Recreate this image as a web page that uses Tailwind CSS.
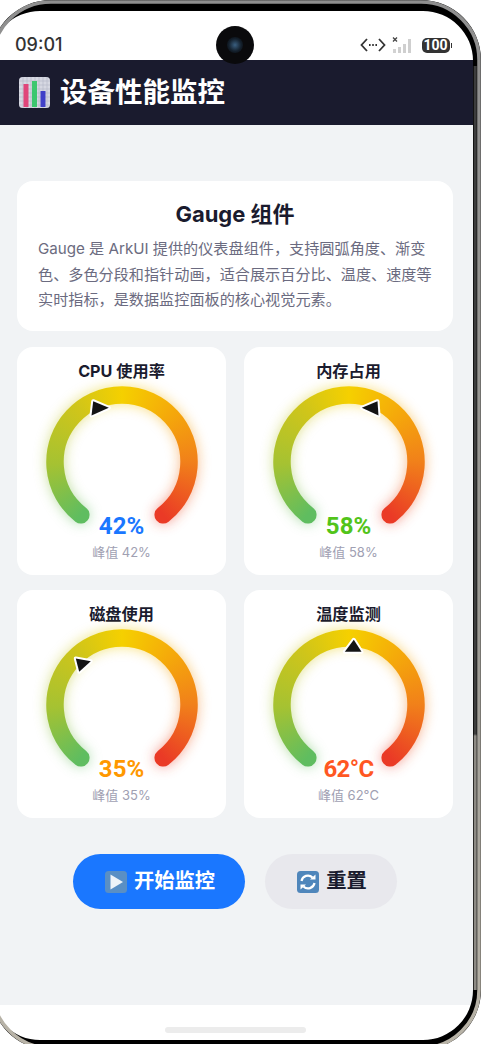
<!DOCTYPE html>
<html lang="zh-CN">
<head>
    <meta charset="UTF-8" />
    <title>设备性能监控</title>
    <script src="https://cdn.jsdelivr.net/npm/@tailwindcss/browser@4"></script>
</head>
<body class="bg-white font-['Inter','Noto_Sans_CJK_SC',sans-serif] text-[#1a1b2e]">

<!-- shared gauge mask and glow -->
<svg class="absolute w-0 h-0">
    <defs>
        <filter id="glow" x="-30%" y="-30%" width="160%" height="160%"><feGaussianBlur stdDeviation="6.5" /></filter>
        <mask id="ringMask" maskUnits="userSpaceOnUse" x="-20" y="-20" width="200" height="200">
            <path d="M38.8 132.8 A67 67 0 1 1 121.2 132.8" fill="none" stroke="#fff" stroke-width="17.5" stroke-linecap="round" />
        </mask>
    </defs>
</svg>

<div class="relative h-[1044px] w-[482px] overflow-hidden bg-white">
    <div class="w-[473px]">
        <!-- status bar -->
        <div class="flex h-[60px] items-end justify-between pb-[4px] pl-[15px] pr-[21px]">
            <span class="text-[18px] leading-[22px] font-medium text-[#333]">09:01</span>
            <div class="flex items-center gap-[6px] pb-[2px]">
                <svg width="26" height="16" viewBox="0 0 26 16" fill="none" stroke="#333" stroke-width="1.8"><path d="M7 2 L1.5 8 L7 14 M19 2 L24.5 8 L19 14" /><path d="M9 8h1.6M12.2 8h1.6M15.4 8h1.6" /></svg>
                <svg width="24" height="18" viewBox="0 0 24 18"><path d="M1 1.5l4 4M5 1.5l-4 4" stroke="#444" stroke-width="1.3" /><rect x="1" y="13" width="3" height="4" fill="#d2d2d2" /><rect x="6" y="11" width="3" height="6" fill="#cfcfcf" /><rect x="11" y="8" width="3" height="9" fill="#cfcfcf" /><rect x="16" y="3" width="3" height="14" fill="#cfcfcf" /></svg>
                <div class="flex items-center">
                    <span class="flex h-[15px] w-[28px] items-center justify-center rounded-[5px] bg-[#333] font-['Roboto'] text-[14px] leading-none font-bold text-white">100</span>
                    <span class="ml-[1px] h-[5px] w-[1.5px] bg-[#333]"></span>
                </div>
            </div>
        </div>

        <!-- header -->
        <header class="flex h-[65px] items-center gap-[10px] bg-[#1a1b2e] pl-[19px]">
            <svg width="31" height="31" viewBox="0 0 31 31">
                <rect width="31" height="31" rx="3.5" fill="#d6d8e2" />
                <path d="M0 4h31M0 8h31M0 12h31M0 16h31M0 20h31M0 24h31M0 28h31M4 0v31M8 0v31M12 0v31M16 0v31M20 0v31M24 0v31M28 0v31" stroke="#b4b7c6" stroke-width="0.6" />
                <rect x="4.5" y="7" width="5" height="23" fill="#e0457a" />
                <rect x="13" y="4" width="5" height="26" fill="#3cc76f" />
                <rect x="21.5" y="14" width="5" height="16" fill="#4040c8" />
            </svg>
            <h1 class="text-[27.5px] leading-none font-bold text-white">设备性能监控</h1>
        </header>

        <!-- content -->
        <main class="h-[880px] bg-[#f1f3f5] pt-[56px] pl-[17px] pr-[20px]">
            <section class="h-[150px] rounded-[16px] bg-white px-[21px] pt-[19px]">
                <h2 class="text-center text-[22px] leading-[28px] font-bold">Gauge 组件</h2>
                <p class="mt-[8px] text-[15.15px] leading-[25.5px] whitespace-nowrap text-[#6b6b80]">Gauge 是 ArkUI 提供的仪表盘组件，支持圆弧角度、渐变<br />色、多色分段和指针动画，适合展示百分比、温度、速度等<br />实时指标，是数据监控面板的核心视觉元素。</p>
            </section>

            <div class="mt-[16px] grid grid-cols-2 gap-x-[18px] gap-y-[15px]">
                <!-- CPU -->
                <div class="flex h-[228px] flex-col items-center rounded-[16px] bg-white pt-[14px]">
                    <h3 class="text-[16.2px] leading-[20px] font-bold">CPU 使用率</h3>
                    <div class="relative mt-[0.5px] h-[160px] w-[160px]">
                        <svg width="160" height="160" viewBox="0 0 160 160" class="overflow-visible">
                            <g filter="url(#glow)" opacity="0.5">
                                <foreignObject width="160" height="160" mask="url(#ringMask)"><div class="h-[160px] w-[160px] bg-[conic-gradient(from_180deg,#5fbd60_0deg_38deg,#a5c232_88deg,#cfc51a_140deg,#f5d000_180deg,#f5a90a_225deg,#f1801a_270deg,#ea3a26_322deg_360deg)]"></div></foreignObject>
                            </g>
                            <foreignObject width="160" height="160" mask="url(#ringMask)"><div class="h-[160px] w-[160px] bg-[conic-gradient(from_180deg,#5fbd60_0deg_38deg,#a5c232_88deg,#cfc51a_140deg,#f5d000_180deg,#f5a90a_225deg,#f1801a_270deg,#ea3a26_322deg_360deg)]"></div></foreignObject>
                            <polygon points="51.2,19.2 66.8,25.8 49.5,33.5" fill="#141414" stroke="#fff" stroke-width="4" stroke-linejoin="round" paint-order="stroke" />
                        </svg>
                        <span class="absolute inset-x-0 bottom-[2px] text-center font-['Roboto','Noto_Sans_CJK_SC',sans-serif] text-[24px] leading-[28px] font-bold text-[#1a77ff]">42%</span>
                    </div>
                    <p class="mt-[1.5px] text-[13px] leading-[18px] text-[#a0a0b2]">峰值 42%</p>
                </div>
                <!-- memory -->
                <div class="flex h-[228px] flex-col items-center rounded-[16px] bg-white pt-[14px]">
                    <h3 class="text-[16.2px] leading-[20px] font-bold">内存占用</h3>
                    <div class="relative mt-[0.5px] h-[160px] w-[160px]">
                        <svg width="160" height="160" viewBox="0 0 160 160" class="overflow-visible">
                            <g filter="url(#glow)" opacity="0.5">
                                <foreignObject width="160" height="160" mask="url(#ringMask)"><div class="h-[160px] w-[160px] bg-[conic-gradient(from_180deg,#5fbd60_0deg_38deg,#a5c232_88deg,#cfc51a_140deg,#f5d000_180deg,#f5a90a_225deg,#f1801a_270deg,#ea3a26_322deg_360deg)]"></div></foreignObject>
                            </g>
                            <foreignObject width="160" height="160" mask="url(#ringMask)"><div class="h-[160px] w-[160px] bg-[conic-gradient(from_180deg,#5fbd60_0deg_38deg,#a5c232_88deg,#cfc51a_140deg,#f5d000_180deg,#f5a90a_225deg,#f1801a_270deg,#ea3a26_322deg_360deg)]"></div></foreignObject>
                            <polygon points="108.5,19.2 92.8,25.8 109.5,33.5" fill="#141414" stroke="#fff" stroke-width="4" stroke-linejoin="round" paint-order="stroke" />
                        </svg>
                        <span class="absolute inset-x-0 bottom-[2px] text-center font-['Roboto','Noto_Sans_CJK_SC',sans-serif] text-[24px] leading-[28px] font-bold text-[#52c41a]">58%</span>
                    </div>
                    <p class="mt-[1.5px] text-[13px] leading-[18px] text-[#a0a0b2]">峰值 58%</p>
                </div>
                <!-- disk -->
                <div class="flex h-[228px] flex-col items-center rounded-[16px] bg-white pt-[14px]">
                    <h3 class="text-[16.2px] leading-[20px] font-bold">磁盘使用</h3>
                    <div class="relative mt-[0.5px] h-[160px] w-[160px]">
                        <svg width="160" height="160" viewBox="0 0 160 160" class="overflow-visible">
                            <g filter="url(#glow)" opacity="0.5">
                                <foreignObject width="160" height="160" mask="url(#ringMask)"><div class="h-[160px] w-[160px] bg-[conic-gradient(from_180deg,#5fbd60_0deg_38deg,#a5c232_88deg,#cfc51a_140deg,#f5d000_180deg,#f5a90a_225deg,#f1801a_270deg,#ea3a26_322deg_360deg)]"></div></foreignObject>
                            </g>
                            <foreignObject width="160" height="160" mask="url(#ringMask)"><div class="h-[160px] w-[160px] bg-[conic-gradient(from_180deg,#5fbd60_0deg_38deg,#a5c232_88deg,#cfc51a_140deg,#f5d000_180deg,#f5a90a_225deg,#f1801a_270deg,#ea3a26_322deg_360deg)]"></div></foreignObject>
                            <polygon points="33.8,33.5 48.8,36.2 37.2,46.8" fill="#141414" stroke="#fff" stroke-width="4" stroke-linejoin="round" paint-order="stroke" />
                        </svg>
                        <span class="absolute inset-x-0 bottom-[2px] text-center font-['Roboto','Noto_Sans_CJK_SC',sans-serif] text-[24px] leading-[28px] font-bold text-[#ff9800]">35%</span>
                    </div>
                    <p class="mt-[1.5px] text-[13px] leading-[18px] text-[#a0a0b2]">峰值 35%</p>
                </div>
                <!-- temperature -->
                <div class="flex h-[228px] flex-col items-center rounded-[16px] bg-white pt-[14px]">
                    <h3 class="text-[16.2px] leading-[20px] font-bold">温度监测</h3>
                    <div class="relative mt-[0.5px] h-[160px] w-[160px]">
                        <svg width="160" height="160" viewBox="0 0 160 160" class="overflow-visible">
                            <g filter="url(#glow)" opacity="0.5">
                                <foreignObject width="160" height="160" mask="url(#ringMask)"><div class="h-[160px] w-[160px] bg-[conic-gradient(from_180deg,#5fbd60_0deg_38deg,#a5c232_88deg,#cfc51a_140deg,#f5d000_180deg,#f5a90a_225deg,#f1801a_270deg,#ea3a26_322deg_360deg)]"></div></foreignObject>
                            </g>
                            <foreignObject width="160" height="160" mask="url(#ringMask)"><div class="h-[160px] w-[160px] bg-[conic-gradient(from_180deg,#5fbd60_0deg_38deg,#a5c232_88deg,#cfc51a_140deg,#f5d000_180deg,#f5a90a_225deg,#f1801a_270deg,#ea3a26_322deg_360deg)]"></div></foreignObject>
                            <polygon points="84.8,14.8 92.5,26.8 75.8,26.8" fill="#141414" stroke="#fff" stroke-width="4" stroke-linejoin="round" paint-order="stroke" />
                        </svg>
                        <span class="absolute inset-x-0 bottom-[2px] text-center font-['Roboto','Noto_Sans_CJK_SC',sans-serif] text-[24px] leading-[28px] font-bold tracking-[-0.6px] text-[#ff5722]">62°C</span>
                    </div>
                    <p class="mt-[1.5px] text-[13px] leading-[18px] text-[#a0a0b2]">峰值 62°C</p>
                </div>
            </div>

            <!-- buttons -->
            <div class="mt-[36px] flex justify-center gap-[20px]">
                <button class="flex h-[55px] w-[172px] items-center justify-center gap-[7px] rounded-full bg-[#1a77ff] pl-[2px] text-[20.3px] font-bold text-white">
                    <svg width="22" height="22" viewBox="0 0 22 22"><rect width="22" height="22" rx="3.5" fill="#5a8fc4" /><path d="M5.5 3.5 L18 11 L5.5 18.5Z" fill="#eef3f8" /></svg>
                    开始监控
                </button>
                <button class="flex h-[55px] w-[132px] items-center justify-center gap-[7px] rounded-full bg-[#e8e8ed] pl-[2px] text-[20.3px] font-bold text-[#1a1b2e]">
                    <svg width="22" height="22" viewBox="0 0 22 22" fill="none"><rect width="22" height="22" rx="3.5" fill="#4f86bb" /><path d="M4.5 10 A6.5 6.5 0 0 1 15.5 6.5" stroke="#fff" stroke-width="2.2" /><path d="M17.5 12 A6.5 6.5 0 0 1 6.5 15.5" stroke="#fff" stroke-width="2.2" /><path d="M13 8.5h5.5V3.5Z M9 13.5H3.5v5Z" fill="#fff" /></svg>
                    重置
                </button>
            </div>
        </main>

        <!-- home indicator -->
        <div class="flex justify-center pt-[22px]">
            <span class="ml-[-3px] h-[6px] w-[141px] rounded-full bg-[#ececec]"></span>
        </div>
    </div>

    <!-- camera cutout -->
    <div class="absolute top-[26px] left-[216px] flex h-[38px] w-[38px] items-center justify-center rounded-full bg-[#0a0a0c]">
        <div class="h-[16px] w-[16px] rounded-full bg-[radial-gradient(circle,#3a5f80_0%,#14202c_55%,#050608_100%)]"></div>
    </div>

    <!-- phone bezel over the screen -->
    <svg class="absolute inset-0" width="482" height="1044" viewBox="0 0 482 1044" fill="none">
        <defs>
            <linearGradient id="edgeOuter" x1="0" y1="0" x2="0" y2="1044" gradientUnits="userSpaceOnUse">
                <stop offset="0" stop-color="#8f8f8f" />
                <stop offset="0.6" stop-color="#9c9a94" />
                <stop offset="1" stop-color="#b9b4a8" />
            </linearGradient>
            <linearGradient id="edgeInner" x1="0" y1="0" x2="0" y2="1044" gradientUnits="userSpaceOnUse">
                <stop offset="0" stop-color="#3c3c3c" />
                <stop offset="0.703" stop-color="#3c3c3c" />
                <stop offset="0.705" stop-color="#8d8a84" />
                <stop offset="1" stop-color="#8d8a84" />
            </linearGradient>
        </defs>
        <!-- white outside the phone, black band round the screen -->
        <path fill-rule="evenodd" fill="#fff" d="M-20-20H500V1064H-20Z M-10 61A61 61 0 0 1 51 0H421A60 60 0 0 1 481 60V990A60 60 0 0 1 421 1050H51A61 61 0 0 1 -10 989Z" />
        <path fill-rule="evenodd" fill="#000" d="M-10 61A61 61 0 0 1 51 0H421A60 60 0 0 1 481 60V990A60 60 0 0 1 421 1050H51A61 61 0 0 1 -10 989Z M-10 61A50 50 0 0 1 40 11H423A50 50 0 0 1 473 61V990A50 50 0 0 1 423 1040H40A50 50 0 0 1 -10 990Z" />
        <!-- metal edge -->
        <path d="M-8 61A59 59 0 0 1 51 2H421A58 58 0 0 1 479 60V990A58 58 0 0 1 421 1048H51A59 59 0 0 1 -8 989Z" stroke="url(#edgeOuter)" stroke-width="3.5" />
        <path d="M475.2 66V990" stroke="url(#edgeInner)" stroke-width="3" />
    </svg>
</div>

</body>
</html>
